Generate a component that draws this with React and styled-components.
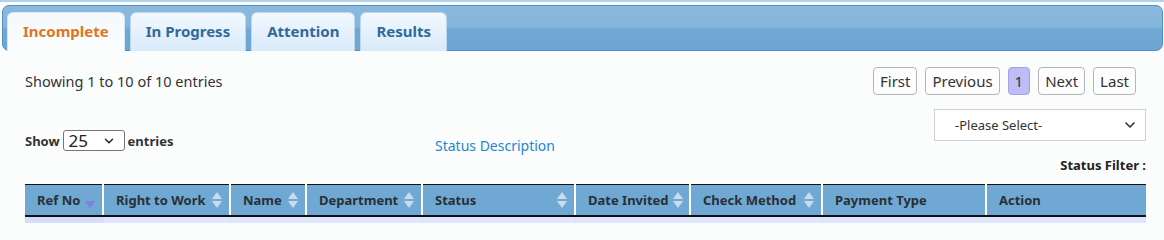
import React, { useState } from 'react';
import styled, { createGlobalStyle } from 'styled-components';
import { ChevronDown } from 'lucide-react';

const GlobalStyle = createGlobalStyle`
  html, body {
    margin: 0;
    padding: 0;
    background: #fbfdfd;
  }
  body {
    font-family: "Noto Sans", "Open Sans", Arial, sans-serif;
    color: #333;
  }
  * {
    box-sizing: border-box;
  }
`;

const TABS = ['Incomplete', 'In Progress', 'Attention', 'Results'];

const COLUMNS = [
  { label: 'Ref No', width: 78, sort: 'desc' },
  { label: 'Right to Work', width: 127, sort: 'both' },
  { label: 'Name', width: 76, sort: 'both' },
  { label: 'Department', width: 116, sort: 'both' },
  { label: 'Status', width: 153, sort: 'both' },
  { label: 'Date Invited', width: 115, sort: 'both' },
  { label: 'Check Method', width: 132, sort: 'both' },
  { label: 'Payment Type', width: 164 },
  { label: 'Action', width: 160 },
];

const SortIcon = ({ mode }) => (
  <StSort width="10" height="18" viewBox="0 0 10 18">
    {mode === 'both' && <polygon points="5,1 10,8 0,8" fill="#c9dcec" />}
    <polygon points="0,10 10,10 5,17" fill={mode === 'desc' ? '#7d7fe6' : '#c9dcec'} />
  </StSort>
);

const App = () => {
  const [activeTab, setActiveTab] = useState('Incomplete');

  return (
    <>
      <GlobalStyle />
      <StPage>
        <StTabBar>
          {TABS.map((tab) => (
            <StTab key={tab} $active={activeTab === tab} onClick={() => setActiveTab(tab)}>
              {tab}
            </StTab>
          ))}
        </StTabBar>

        <StContent>
          <StInfoRow>
            <StInfo>Showing 1 to 10 of 10 entries</StInfo>
            <StPager>
              <StPageButton>First</StPageButton>
              <StPageButton>Previous</StPageButton>
              <StPageButton $current>1</StPageButton>
              <StPageButton>Next</StPageButton>
              <StPageButton>Last</StPageButton>
            </StPager>
          </StInfoRow>

          <StControls>
            <StLength>
              Show
              <StSmallSelectWrap>
                <StSmallSelect defaultValue="25">
                  <option>10</option>
                  <option>25</option>
                  <option>50</option>
                </StSmallSelect>
                <StSmallChevron size={14} strokeWidth={2.5} />
              </StSmallSelectWrap>
              entries
            </StLength>
            <StDescLink href="#">Status Description</StDescLink>
            <StFilter>
              <StFilterSelectWrap>
                <StFilterSelect defaultValue="">
                  <option value="">-Please Select-</option>
                </StFilterSelect>
                <StFilterChevron size={16} strokeWidth={2.5} />
              </StFilterSelectWrap>
              <StFilterLabel>Status Filter :</StFilterLabel>
            </StFilter>
          </StControls>

          <StTable>
            <colgroup>
              {COLUMNS.map((c) => (
                <col key={c.label} style={{ width: c.width }} />
              ))}
            </colgroup>
            <thead>
              <tr>
                {COLUMNS.map((c) => (
                  <StTh key={c.label}>
                    <StThInner>
                      <span>{c.label}</span>
                      {c.sort && <SortIcon mode={c.sort} />}
                    </StThInner>
                  </StTh>
                ))}
              </tr>
            </thead>
            <tbody>
              <tr>
                {COLUMNS.map((c) => (
                  <StTd key={c.label} />
                ))}
              </tr>
            </tbody>
          </StTable>
        </StContent>
      </StPage>
    </>
  );
};

export default App;

// 페이지 + 탭

const StPage = styled.div`
  width: 1164px;
  height: 223px;
  overflow: hidden;
  border-top: 2px solid #b3d2ea;
  padding-top: 3px;
`;

const StTabBar = styled.div`
  margin: 0 1px 0 2px;
  height: 46px;
  display: flex;
  align-items: flex-end;
  gap: 5px;
  padding-left: 4px;
  border: 1px solid #4b90cf;
  border-radius: 7px;
  background: linear-gradient(to bottom, #8bb9dd 0%, #86b5db 48%, #70a8d3 52%, #6ea6d2 100%);
`;

const StTab = styled.button`
  height: 39px;
  margin-bottom: -1px;
  padding: 0 15px 3px;
  border: 1px solid ${({ $active }) => ($active ? '#d6e6f3' : '#bcd7ee')};
  border-bottom: none;
  border-radius: 6px 6px 0 0;
  background: ${({ $active }) =>
    $active
      ? 'linear-gradient(to bottom, #f4f9fc 0%, #fbfdfe 100%)'
      : 'linear-gradient(to bottom, #f1f8fe 0%, #e6f1fc 50%, #d8eaf9 100%)'};
  color: ${({ $active }) => ($active ? '#e2751b' : '#2f6a9b')};
  font-family: inherit;
  font-size: 15px;
  font-weight: 700;
  cursor: pointer;
`;

// 본문

const StContent = styled.div`
  padding: 0 18px 0 25px;
`;

const StInfoRow = styled.div`
  display: flex;
  justify-content: space-between;
  align-items: center;
  margin-top: 16px;
`;

const StInfo = styled.div`
  font-size: 14.5px;
  color: #333;
`;

const StPager = styled.div`
  display: flex;
  gap: 8px;
  margin-right: 10px;
`;

const StPageButton = styled.button`
  height: 28px;
  padding: 0 6px;
  border: 1px solid ${({ $current }) => ($current ? '#a3a3dc' : '#b5b5b5')};
  border-radius: 4px;
  background: ${({ $current }) => ($current ? '#bdbdf8' : '#fdfdfd')};
  color: #333;
  font-family: inherit;
  font-size: 15px;
  cursor: pointer;
`;

const StControls = styled.div`
  display: grid;
  grid-template-columns: 410px 1fr 212px;
  margin-top: 14px;
`;

const StLength = styled.div`
  display: flex;
  align-items: center;
  gap: 3px;
  margin-top: 21px;
  height: 21px;
  font-size: 13px;
  font-weight: 700;
  color: #333;
`;

const StSmallSelectWrap = styled.div`
  position: relative;
  width: 62px;
  height: 21px;
`;

const StSmallSelect = styled.select`
  appearance: none;
  width: 100%;
  height: 100%;
  padding: 0 0 0 5px;
  border: 1px solid #767676;
  border-radius: 3px;
  background: #fff;
  font-family: inherit;
  font-size: 17px;
  color: #222;
  line-height: 19px;
`;

const StSmallChevron = styled(ChevronDown)`
  position: absolute;
  right: 9px;
  top: 4px;
  color: #222;
  pointer-events: none;
`;

const StDescLink = styled.a`
  margin-top: 27px;
  font-size: 14px;
  color: #1f86d0;
  text-decoration: none;
  align-self: start;
  justify-self: start;
`;

const StFilter = styled.div`
  display: flex;
  flex-direction: column;
  align-items: flex-end;
`;

const StFilterSelectWrap = styled.div`
  position: relative;
  width: 212px;
  height: 32px;
`;

const StFilterSelect = styled.select`
  appearance: none;
  width: 100%;
  height: 100%;
  padding: 0 0 0 20px;
  border: 1px solid #d0d0d0;
  background: #fff;
  font-family: inherit;
  font-size: 13px;
  color: #333;
`;

const StFilterChevron = styled(ChevronDown)`
  position: absolute;
  right: 8px;
  top: 8px;
  color: #333;
  pointer-events: none;
`;

const StFilterLabel = styled.div`
  margin-top: 15px;
  font-size: 13px;
  font-weight: 700;
  color: #222;
`;

// 테이블

const StTable = styled.table`
  width: 1121px;
  margin-top: 10px;
  table-layout: fixed;
  border-collapse: collapse;
`;

const StTh = styled.th`
  height: 31px;
  padding: 0 7px 0 12px;
  background: #6fa8d3;
  border-top: 1px solid #111;
  border-bottom: 2px solid #111;
  border-left: 2px solid #fff;
  text-align: left;
  font-size: 13px;
  font-weight: 700;
  color: #2a2f36;
  white-space: nowrap;
  &:first-child {
    border-left: none;
  }
`;

const StThInner = styled.div`
  display: flex;
  align-items: center;
  justify-content: space-between;
`;

const StSort = styled.svg`
  flex: none;
  margin-left: 4px;
`;

const StTd = styled.td`
  height: 30px;
  background: #e0e4fc;
  border-left: 1px solid #d2e2f7;
  &:first-child {
    background: #d8dcfb;
    border-left: none;
  }
`;
